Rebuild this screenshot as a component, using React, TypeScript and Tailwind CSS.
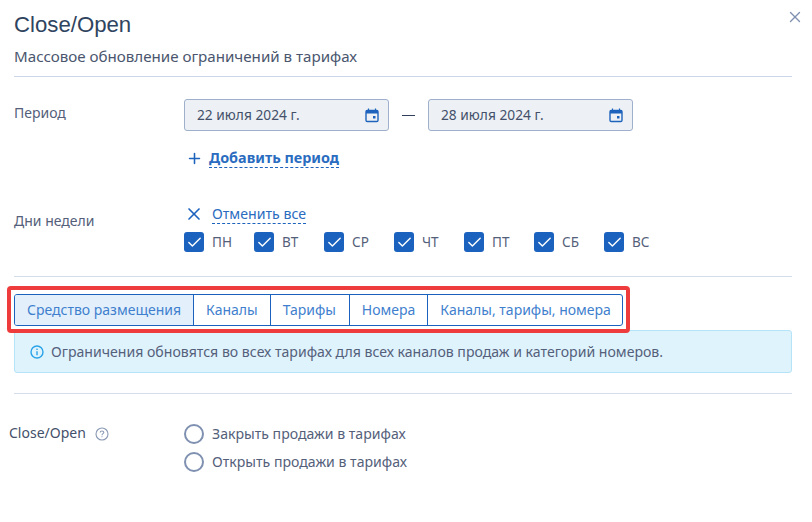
import React from 'react'
import { X, Plus, Check } from 'lucide-react'

const days = ['ПН', 'ВТ', 'СР', 'ЧТ', 'ПТ', 'СБ', 'ВС']
const tabs = ['Средство размещения', 'Каналы', 'Тарифы', 'Номера', 'Каналы, тарифы, номера']

const CalendarIcon = () => (
  <svg width="14" height="15" viewBox="0 0 14 15" fill="none" className="shrink-0">
    <path d="M3.5 0.5V3M10.5 0.5V3" stroke="#1d63bd" strokeWidth="1.2" />
    <rect x="1" y="2.5" width="12" height="11" rx="1.2" stroke="#1d63bd" strokeWidth="1.4" />
    <rect x="1" y="2.5" width="12" height="3" fill="#1d63bd" />
    <rect x="8" y="8" width="2.5" height="2.5" fill="#1d63bd" />
  </svg>
)

const DateInput = ({ value }: { value: string }) => (
  <div className="flex h-[32px] w-[205px] items-center justify-between rounded-[3px] border border-[#9fb0cc] bg-[#edf1f5] pl-[12px] pr-[9px] text-[13.75px] text-[#44506a]">
    <span>{value}</span>
    <CalendarIcon />
  </div>
)

const Radio = ({ label }: { label: string }) => (
  <label className="flex h-[20px] items-center gap-[8px] text-[14.1px] text-[#54607a]">
    <span className="h-[20px] w-[20px] rounded-full border-2 border-[#7f90b0] bg-white" />
    <span className="pb-[2px]">{label}</span>
  </label>
)

const App = () => {
  return (
    <div
      className="relative h-[522px] w-[812px] overflow-hidden bg-white pl-[14px] pr-[20px]"
      style={{ fontFamily: '"Noto Sans", sans-serif' }}
    >
      <X size={18} strokeWidth={1.8} className="absolute left-[786px] top-[8px] text-[#7f90b0]" />

      <h1 className="pt-[10px] font-['Liberation_Sans',sans-serif] text-[22.2px] leading-[30px] text-[#2f4460]">
        Close/Open
      </h1>
      <p className="mt-[6px] text-[15.13px] leading-[20px] text-[#4a566e]">
        Массовое обновление ограничений в тарифах
      </p>
      <div className="mt-[10px] h-px bg-[#ccd6e8]" />

      <div className="mt-[22px] flex">
        <div className="w-[170px] pt-[4px] text-[14px] leading-[20px] text-[#54607a]">Период</div>
        <div>
          <div className="flex items-center">
            <DateInput value="22 июля 2024 г." />
            <span className="mx-[13px] h-px w-[13px] bg-[#2f3f5c]" />
            <DateInput value="28 июля 2024 г." />
          </div>
          <div className="mt-[18px] flex items-center gap-[6px] pl-[2px]">
            <Plus size={17} strokeWidth={2.2} className="text-[#1d63bd]" />
            <span className="border-b border-dashed border-[#1d63bd] text-[14.4px] leading-[18px] font-bold text-[#2a6cc0]">
              Добавить период
            </span>
          </div>
        </div>
      </div>

      <div className="mt-[36px] flex">
        <div className="w-[170px] pt-[7px] text-[14px] leading-[20px] text-[#54607a]">Дни недели</div>
        <div>
          <div className="flex items-center gap-[8px]">
            <X size={20} strokeWidth={2} className="text-[#1d63bd]" />
            <span className="border-b border-dashed border-[#1d63bd] text-[14.15px] leading-[18px] text-[#2a6cc0]">
              Отменить все
            </span>
          </div>
          <div className="mt-[8px] flex">
            {days.map((day) => (
              <div key={day} className="flex w-[70px] items-center gap-[8px] text-[13.5px] text-[#54607a]">
                <span className="flex h-[20px] w-[20px] items-center justify-center rounded-[3px] bg-[#1a62bd]">
                  <Check size={17} strokeWidth={2} className="text-white" />
                </span>
                {day}
              </div>
            ))}
          </div>
        </div>
      </div>

      <div className="mt-[24px] h-px bg-[#d5dcea]" />

      <div className="relative mt-[17px] w-fit">
        <div className="flex h-[32px] rounded-[3px] border border-[#1a62bd] text-[14px] text-[#3f7fce]">
          {tabs.map((tab, i) => (
            <div
              key={tab}
              className={
                i === 0
                  ? 'flex items-center rounded-l-[2px] bg-[#e3f0fb] px-[12px] pb-[2px]'
                  : i === 2
                    ? 'flex items-center border-l border-[#1a62bd] pl-[12px] pr-[13px] pb-[2px]'
                    : i === 4
                      ? 'flex items-center border-l border-[#1a62bd] pl-[12px] pr-[11px] pb-[2px]'
                      : 'flex items-center border-l border-[#1a62bd] px-[12px] pb-[2px]'
              }
            >
              {tab}
            </div>
          ))}
        </div>
        <div className="absolute -top-[8px] -bottom-[7px] -inset-x-[7px] z-10 rounded-[4px] border-[4px] border-[#ee3b3b]" />
      </div>

      <div className="mt-[4px] flex h-[43px] items-center gap-[7px] rounded-[3px] border border-[#b5e3f7] bg-[#dff3fd] pl-[15px] text-[14.1px] text-[#54607a]">
        <svg width="14" height="14" viewBox="0 0 14 14" fill="none" className="shrink-0">
          <circle cx="7" cy="7" r="6" stroke="#29a3e8" strokeWidth="1.4" />
          <path d="M7 6.2V10.2" stroke="#29a3e8" strokeWidth="1.4" />
          <rect x="6.3" y="3.6" width="1.4" height="1.4" fill="#29a3e8" />
        </svg>
        Ограничения обновятся во всех тарифах для всех каналов продаж и категорий номеров.
      </div>

      <div className="mt-[20px] h-px bg-[#d5dcea]" />

      <div className="mt-[30px] -ml-[5px] flex">
        <div className="-mt-[1px] flex w-[175px] items-start gap-[9px] text-[14px] leading-[20px] text-[#44506a]">
          Close/Open
          <svg width="14" height="14" viewBox="0 0 14 14" fill="none" className="mt-[4px]">
            <circle cx="7" cy="7" r="6" stroke="#8a9ab5" strokeWidth="1.1" />
            <path d="M5.2 5.5C5.2 4.5 6 4 7 4C8 4 8.8 4.6 8.8 5.5C8.8 6.7 7 6.7 7 8.2" stroke="#8a9ab5" strokeWidth="1.1" />
            <rect x="6.5" y="9.2" width="1" height="1" fill="#8a9ab5" />
          </svg>
        </div>
        <div className="flex flex-col gap-[8px]">
          <Radio label="Закрыть продажи в тарифах" />
          <Radio label="Открыть продажи в тарифах" />
        </div>
      </div>
    </div>
  )
}

export default App
